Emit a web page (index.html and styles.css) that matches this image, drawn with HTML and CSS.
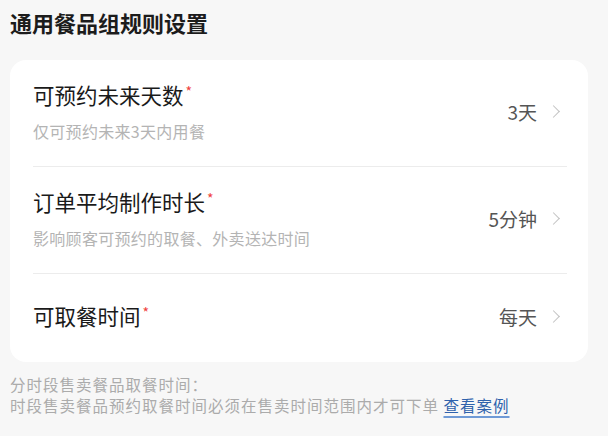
FILE: index.html
```html
<!DOCTYPE html>
<html lang="zh-CN">

<head>
  <meta charset="UTF-8">
  <meta name="viewport" content="width=device-width, initial-scale=1.0">
  <title>通用餐品组规则设置</title>
  <link rel="stylesheet" href="styles.css">
</head>

<body>

  <div class="page">
    <h1 class="page-title">通用餐品组规则设置</h1>

    <div class="card">
      <div class="row">
        <div class="row-main">
          <div class="row-title">可预约未来天数<span class="req">*</span></div>
          <div class="row-desc">仅可预约未来3天内用餐</div>
        </div>
        <div class="row-value">3天<span class="chevron"></span></div>
      </div>

      <div class="row">
        <div class="row-main">
          <div class="row-title">订单平均制作时长<span class="req">*</span></div>
          <div class="row-desc">影响顾客可预约的取餐、外卖送达时间</div>
        </div>
        <div class="row-value">5分钟<span class="chevron"></span></div>
      </div>

      <div class="row single">
        <div class="row-main">
          <div class="row-title">可取餐时间<span class="req">*</span></div>
        </div>
        <div class="row-value">每天<span class="chevron"></span></div>
      </div>
    </div>

    <div class="note">
      <p>分时段售卖餐品取餐时间：</p>
      <p>时段售卖餐品预约取餐时间必须在售卖时间范围内才可下单 <a href="#" class="note-link">查看案例</a></p>
    </div>
  </div>

</body>

</html>
```

FILE: styles.css
```css
* {
  box-sizing: border-box;
  margin: 0;
  padding: 0;
  font-family: "Noto Sans CJK SC", "Noto Sans", sans-serif;
}

body {
  background: #f7f7f7;
  color: #1c1c1c;
  width: 608px;
  height: 436px;
  overflow: hidden;
}

.page {
  padding: 0 20px 0 10px;
}

.page-title {
  font-size: 22px;
  font-weight: 700;
  line-height: 30px;
  margin-top: 7px;
  margin-bottom: 23px;
}

.card {
  background: #fff;
  border-radius: 16px;
  padding: 0 21px 0 23px;
}

.row {
  display: flex;
  align-items: center;
  justify-content: space-between;
  padding: 20px 0 24px;
  border-bottom: 1px solid #ececec;
}

.row.single {
  padding: 27px 0 31px;
  border-bottom: none;
}

.row-title {
  font-size: 21.5px;
  font-weight: 400;
  line-height: 30px;
  color: #1a1a1a;
}

.req {
  color: #f0413c;
  font-size: 14px;
  line-height: 0;
  vertical-align: 7px;
  margin-left: 2px;
}

.row-desc {
  margin-top: 10px;
  font-size: 16px;
  line-height: 22px;
  color: #b4b4b4;
  letter-spacing: 0.3px;
}

.row-value {
  display: flex;
  align-items: center;
  font-size: 19px;
  color: #555;
  margin-right: 9px;
}

.chevron {
  width: 9px;
  height: 9px;
  border-top: 1.5px solid #c2c2c2;
  border-right: 1.5px solid #c2c2c2;
  transform: rotate(45deg);
  margin-left: 12px;
}

.note {
  margin-top: 12px;
  font-size: 15.5px;
  line-height: 21px;
  color: #ababab;
  letter-spacing: 1px;
}

.note-link {
  color: #2f62ac;
  text-decoration: underline;
  text-decoration-color: #6f9ad6;
  text-decoration-thickness: 2px;
  text-underline-offset: 4px;
}
```
